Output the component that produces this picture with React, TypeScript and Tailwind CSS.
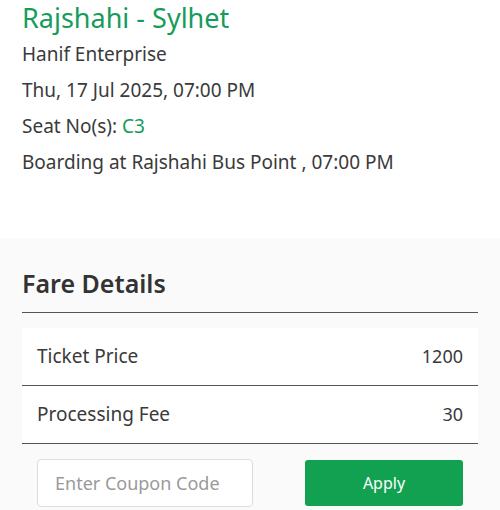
import React from 'react';

const font = { fontFamily: '"Noto Sans", "Open Sans", sans-serif' };

const FareRow = ({ label, value }: { label: string; value: string }) => (
  <div className="flex items-center justify-between h-[58px] px-[15px] border-b border-[#555]">
    <span className="text-[19px] text-[#3a3a3a]">{label}</span>
    <span className="text-[18px] text-[#3a3a3a]">{value}</span>
  </div>
);

export default function App() {
  return (
    <div className="w-[500px] h-[510px] overflow-hidden bg-[#fafafa]" style={font}>
      {/* Trip info */}
      <div className="bg-white h-[238px] px-[22px]">
        <h1 className="text-[27px] leading-[36px] text-[#169c5a]">Rajshahi - Sylhet</h1>
        <div className="text-[19px] leading-[36px] text-[#3a3a3a]">
          <p>Hanif Enterprise</p>
          <p>Thu, 17 Jul 2025, 07:00 PM</p>
          <p>
            Seat No(s): <span className="text-[#169c5a]">C3</span>
          </p>
          <p>Boarding at Rajshahi Bus Point , 07:00 PM</p>
        </div>
      </div>

      {/* Fare details */}
      <div className="px-[22px]">
        <h2 className="text-[25px] font-semibold text-[#333] leading-[32px] pt-[29px] pb-[13px] border-b border-[#555]">
          Fare Details
        </h2>
        <div className="mt-[15px] bg-white">
          <FareRow label="Ticket Price" value="1200" />
          <FareRow label="Processing Fee" value="30" />
        </div>
        <div className="flex items-center justify-between px-[15px] pt-[15px]">
          <input
            placeholder="Enter Coupon Code"
            className="w-[216px] h-[48px] rounded border border-[#ddd] bg-white px-[17px] text-[18px] text-[#333] placeholder:text-[#9a9a9a] outline-none"
            style={font}
          />
          <button className="w-[158px] h-[46px] rounded-[3px] bg-[#12a150] text-white text-[16px]">
            Apply
          </button>
        </div>
      </div>
    </div>
  );
}
